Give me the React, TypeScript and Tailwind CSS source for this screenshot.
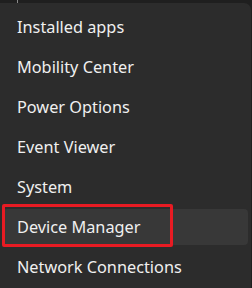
import React from "react";

const items = [
  "Installed apps",
  "Mobility Center",
  "Power Options",
  "Event Viewer",
  "System",
  "Device Manager",
  "Network Connections",
];

export default function App() {
  return (
    <div className="relative w-[252px] h-[288px] overflow-hidden bg-[#1f1f1f]" style={{ fontFamily: '"Noto Sans", "Open Sans", sans-serif' }}>
      <div className="absolute left-[17px] top-0 w-px h-[3px] bg-[#8a8a8a]" />
      <div className="mt-[3px] ml-[-8px] w-[259px] h-[300px] rounded-tr-[7px] rounded-tl-[7px] bg-[#2c2c2c] pl-[11px] pr-[3px] pt-[6px] flex flex-col gap-[4px]">
        {items.map((t) => {
          const active = t === "Device Manager";
          return (
            <div
              key={t}
              className={`relative h-[36px] flex items-center pl-[14px] rounded-[4px] text-[16.3px] text-[#f0f0f0] ${active ? "bg-[#383838]" : ""}`}
            >
              {t}
              {active && (
                <div className="absolute left-[-1px] top-[-5px] w-[171px] h-[43px] border-[3px] border-[#e81b23] rounded-[2px]" />
              )}
            </div>
          );
        })}
      </div>
    </div>
  );
}
